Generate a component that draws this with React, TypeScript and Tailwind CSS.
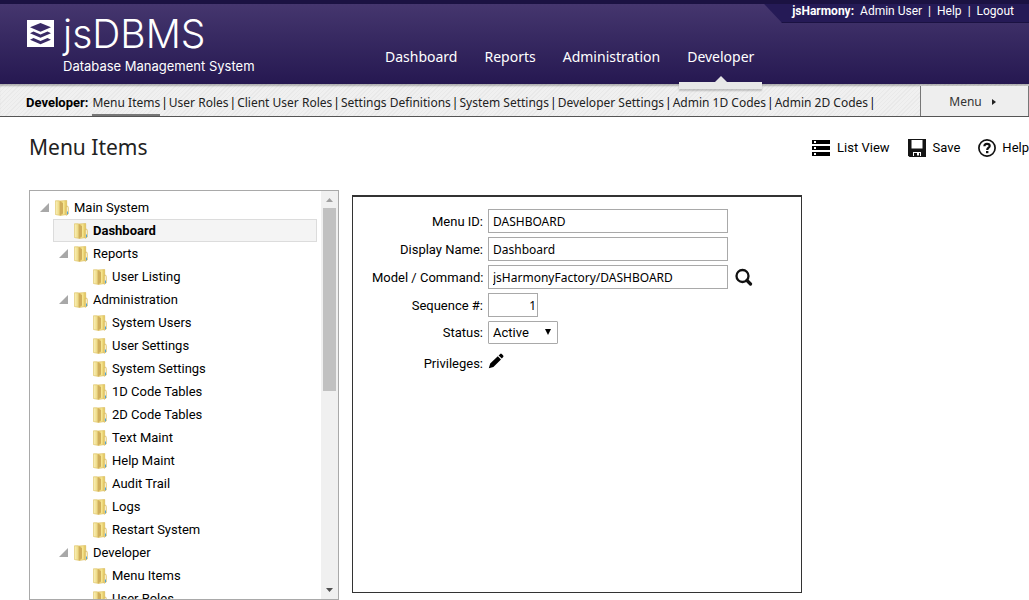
import { useState } from "react";

const sans = "font-['Noto_Sans',sans-serif]";

const mainTabs = ["Dashboard", "Reports", "Administration", "Developer"];

const subLinks = [
  "Menu Items",
  "User Roles",
  "Client User Roles",
  "Settings Definitions",
  "System Settings",
  "Developer Settings",
  "Admin 1D Codes",
  "Admin 2D Codes",
];

type TreeNode = { label: string; depth: number; open?: boolean };

const tree: TreeNode[] = [
  { label: "Main System", depth: 0, open: true },
  { label: "Dashboard", depth: 1 },
  { label: "Reports", depth: 1, open: true },
  { label: "User Listing", depth: 2 },
  { label: "Administration", depth: 1, open: true },
  { label: "System Users", depth: 2 },
  { label: "User Settings", depth: 2 },
  { label: "System Settings", depth: 2 },
  { label: "1D Code Tables", depth: 2 },
  { label: "2D Code Tables", depth: 2 },
  { label: "Text Maint", depth: 2 },
  { label: "Help Maint", depth: 2 },
  { label: "Audit Trail", depth: 2 },
  { label: "Logs", depth: 2 },
  { label: "Restart System", depth: 2 },
  { label: "Developer", depth: 1, open: true },
  { label: "Menu Items", depth: 2 },
  { label: "User Roles", depth: 2 },
];

const indents = ["pl-0", "pl-[19px]", "pl-[38px]"];

function Logo() {
  return (
    <svg viewBox="0 0 27 27" className="size-[27px] shrink-0" aria-hidden="true">
      <rect width="27" height="27" fill="#fff" />
      <g fill="#3a2b66">
        <path d="M13.5 3 24 7.3 13.5 11.800 3 7.300Z" />
        <path d="M3 13.200 6.500 11.600 13.500 14.400 20.500 11.600 24 13.200 13.500 17.800Z" />
        <path d="M3 19.700 6.500 18.100 13.500 20.900 20.500 18.100 24 19.700 13.500 24.300Z" />
      </g>
    </svg>
  );
}

function Folder() {
  return (
    <svg viewBox="0 0 14 16" className="h-4 w-[14px] shrink-0" aria-hidden="true">
      <defs>
        <linearGradient id="front" x1="0" x2="1">
          <stop offset="0" stopColor="#faf2bd" />
          <stop offset="1" stopColor="#ecd67c" />
        </linearGradient>
        <linearGradient id="back" x1="0" x2="1">
          <stop offset="0" stopColor="#e3c765" />
          <stop offset=".5" stopColor="#f6e794" />
          <stop offset="1" stopColor="#dfbf55" />
        </linearGradient>
      </defs>
      <path d="M5 1 11.700 .5V14.500L5 15.500Z" fill="url(#back)" stroke="#d9b952" strokeWidth=".6" />
      <path d="M11.300 6.500Q13.300 5 13.300 8V14L11.300 15.300Z" fill="#fdf8dc" stroke="#d6b24c" strokeWidth=".7" />
      <path d="M12 11.500H13V14.200H12Z" fill="#4fa3d8" />
      <path d="M.4.800H4.600V15.300L.4 14.500Z" fill="url(#front)" stroke="#e0c467" strokeWidth=".7" />
      <path d="M4.800 1.200 8 3V13.500L4.800 15.500Z" fill="#d0ae5c" />
    </svg>
  );
}

function ListIcon() {
  return (
    <svg viewBox="0 0 18 16" className="h-4 w-[18px]" aria-hidden="true">
      <path d="M0 0H18V4H0ZM0 6H18V10H0ZM0 12H18V16H0Z" />
      <path d="M2 1H4V3H2ZM2 7H4V9H2ZM2 13H4V15H2Z" fill="#fff" />
    </svg>
  );
}

function SaveIcon() {
  return (
    <svg viewBox="0 0 18 18" className="size-[18px]" aria-hidden="true">
      <path d="M0 0H18V18H1.500L0 16.500Z" fill="#151515" />
      <path d="M3.500 1H14.500V9.500H3.500Z" fill="#fff" />
      <path d="M5 13H13V17H5Z" fill="#fff" />
      <path d="M6 14H12V17H6Z" fill="#151515" />
      <path d="M9 14H11V16.500H9Z" fill="#fff" />
    </svg>
  );
}

function HelpIcon() {
  return (
    <svg viewBox="0 0 18 18" className="size-[18px]" fill="none" stroke="#111" aria-hidden="true">
      <circle cx="9" cy="9" r="8.100" strokeWidth="1.700" />
      <path d="M6.400 7.200C6.400 5.500 7.500 4.800 9 4.800S11.700 5.600 11.700 6.900C11.700 8.700 9.200 8.700 9.200 10.900" strokeWidth="2.200" />
      <path d="M8 12H10.400V14.200H8Z" fill="#111" stroke="none" />
    </svg>
  );
}

const inputClass =
  "h-6 border border-[#a9a9a9] bg-white px-1 font-['Noto_Sans',sans-serif] text-[12px] text-black outline-none";

const labelClass = "pt-[2px] text-right whitespace-nowrap";

export default function App() {
  const [selected, setSelected] = useState(1);
  const [status, setStatus] = useState("Active");

  return (
    <div className="flex min-h-screen flex-col overflow-x-hidden bg-white font-[Roboto,sans-serif] text-[13px] text-black">
      <header className="relative flex h-[84px] border-t-4 border-[#1b1242] bg-linear-to-b from-[#45366e] to-[#261851] text-white">
        <div className="flex w-[385px] shrink-0 gap-[9px] pt-4 pl-[27px]">
          <Logo />
          <div className="font-[Inter,sans-serif]">
            <div className="-mt-2 text-[39px] leading-[44px] font-light">jsDBMS</div>
            <div className="text-[13px] leading-5">Database Management System</div>
          </div>
        </div>
        <nav className={`flex items-start gap-[27px] pt-[42px] text-[14px] leading-[22px] ${sans}`}>
          {mainTabs.map((tab) => (
            <a key={tab} href="#" className="relative whitespace-nowrap">
              {tab}
              {tab === "Developer" && (
                <span className="absolute -inset-x-2 top-[30px] z-10 flex flex-col items-center">
                  <svg viewBox="0 0 12 6" className="h-[6px] w-3" aria-hidden="true">
                    <path d="M0 6 6 0 12 6Z" fill="#e6e6e6" />
                  </svg>
                  <span className="h-[7px] w-full bg-[#e8e8e8] shadow-[0_2px_2px_#0003]" />
                </span>
              )}
            </a>
          ))}
        </nav>
        <div className="absolute top-0 right-0 flex h-[19px] items-start gap-[6px] border-b border-[#1b1242] bg-[#251a56] pr-[15px] pl-7 text-[12px] leading-[15px] [clip-path:polygon(0_0,100%_0,100%_100%,18px_100%)]">
          <span className="font-bold">jsHarmony:</span>
          <a href="#">Admin User</a>
          <span>|</span>
          <a href="#">Help</a>
          <span>|</span>
          <a href="#">Logout</a>
        </div>
      </header>

      <div className="flex h-[33px] border-b border-[#555] bg-[repeating-linear-gradient(135deg,#f0f0f0_0px,#f0f0f0_2px,#e9e9e9_2px,#e9e9e9_3px)] shadow-[inset_0_3px_2px_-1px_#0004]">
        <nav className={`flex grow items-stretch pl-[26px] text-[12px] whitespace-nowrap text-[#222] ${sans}`}>
          <span className="mr-1 flex items-center pt-[5px] font-[Roboto,sans-serif] text-[13px] font-bold text-black">
            Developer:
          </span>
          {subLinks.map((link, i) => (
            <span key={link} className="flex">
              <a
                href="#"
                className={
                  i === 0
                    ? "flex items-center border-b-2 border-[#777] pt-[7px]"
                    : "flex items-center pt-[5px]"
                }
              >
                {link}
              </a>
              <span className="flex items-center px-px pt-[5px] text-black">|</span>
            </span>
          ))}
        </nav>
        <button
          type="button"
          className={`mt-[2px] flex w-[109px] shrink-0 items-center justify-center gap-[10px] border-x border-[#777] bg-[#eee] pt-[2px] pr-1 text-[12px] text-[#333] ${sans}`}
        >
          Menu
          <svg viewBox="0 0 4 6" className="h-[6px] w-1" aria-hidden="true">
            <path d="M0 0 4 3 0 6Z" fill="#222" />
          </svg>
        </button>
      </div>

      <div className="flex items-center justify-between pt-4 pl-[29px]">
        <h1 className={`text-[21px] leading-7 text-[#222] ${sans}`}>Menu Items</h1>
        <div className="flex items-center gap-[18px] pt-[2px]">
          <button type="button" className="flex items-center gap-[7px]">
            <ListIcon />
            List View
          </button>
          <button type="button" className="flex items-center gap-[7px]">
            <SaveIcon />
            Save
          </button>
          <button type="button" className="flex items-center gap-[6px]">
            <HelpIcon />
            Help
          </button>
        </div>
      </div>

      <main className="flex items-start gap-[13px] pt-[29px] pl-[29px]">
        <div className="flex h-[410px] w-[310px] shrink-0 border border-[#a9a9a9]">
          <ul className="grow overflow-hidden pt-[5px] pr-1 pl-[4px]">
            {tree.map((node, i) => (
              <li key={i} className={indents[node.depth]}>
                <button
                  type="button"
                  onClick={() => setSelected(i)}
                  className={
                    selected === i
                      ? "flex h-[23px] w-full items-center gap-[5px] border border-[#dcdcdc] bg-[#f4f4f4] pl-[20px] text-left font-bold"
                      : "flex h-[23px] w-full items-center gap-[5px] pl-[6px] text-left"
                  }
                >
                  {selected !== i && (
                    <svg viewBox="0 0 10 9" className="h-[9px] w-[10px] shrink-0" aria-hidden="true">
                      {node.open && <path d="M0 9 9 0V9Z" fill="#a8a8a8" />}
                    </svg>
                  )}
                  <Folder />
                  {node.label}
                </button>
              </li>
            ))}
          </ul>
          <div className="flex w-[17px] shrink-0 flex-col items-center bg-[#f0f0f0] py-[7px]" aria-hidden="true">
            <svg viewBox="0 0 7 4" className="h-1 w-[7px] shrink-0">
              <path d="M0 4 3.500 0 7 4Z" fill="#a0a0a0" />
            </svg>
            <div className="mt-[6px] h-[183px] w-[13px] bg-[#c1c1c1]" />
            <svg viewBox="0 0 7 4" className="mt-auto h-1 w-[7px] shrink-0">
              <path d="M0 0H7L3.500 4Z" fill="#505050" />
            </svg>
          </div>
        </div>

        <form
          className="mt-[5px] min-h-[398px] w-[450px] border border-t-2 border-[#333] pt-3 pl-[19px]"
          onSubmit={(e) => e.preventDefault()}
        >
          <div className="grid grid-cols-[111px_1fr] items-center gap-x-[5px] gap-y-1">
            <label htmlFor="menu-id" className={labelClass}>Menu ID:</label>
            <input id="menu-id" defaultValue="DASHBOARD" className={`${inputClass} w-[240px]`} />
            <label htmlFor="display" className={labelClass}>Display Name:</label>
            <input id="display" defaultValue="Dashboard" className={`${inputClass} w-[240px]`} />
            <label htmlFor="command" className={labelClass}>Model / Command:</label>
            <div className="flex items-center gap-[7px]">
              <input id="command" defaultValue="jsHarmonyFactory/DASHBOARD" className={`${inputClass} w-[240px]`} />
              <button type="button" aria-label="Search">
                <svg viewBox="0 0 18 18" className="size-[18px]" fill="none" stroke="#111" aria-hidden="true">
                  <circle cx="7.500" cy="8" r="6" strokeWidth="2.300" />
                  <path d="M12 12.500 15.500 16" strokeWidth="3.200" strokeLinecap="round" />
                </svg>
              </button>
            </div>
            <label htmlFor="sequence" className={labelClass}>Sequence #:</label>
            <input id="sequence" defaultValue="1" className="h-6 w-[50px] border border-[#a9a9a9] bg-white pr-px font-['Noto_Sans',sans-serif] text-right text-[12px] text-black outline-none" />
            <label htmlFor="status" className="text-right">Status:</label>
            <div className="relative w-[70px]">
              <select
                id="status"
                value={status}
                onChange={(e) => setStatus(e.target.value)}
                className="block h-[23px] w-full appearance-none rounded-[1px] border border-[#a9a9a9] bg-white pl-1 text-[13px]"
              >
                <option>Active</option>
                <option>Inactive</option>
              </select>
              <svg viewBox="0 0 6 6" className="pointer-events-none absolute top-2 right-[7px] size-[6px]" aria-hidden="true">
                <path d="M0 0H6L3 6Z" />
              </svg>
            </div>
            <span className="pt-[6px] text-right">Privileges:</span>
            <button type="button" aria-label="Edit privileges" className="justify-self-start">
              <svg viewBox="0 0 16 16" className="size-4" aria-hidden="true">
                <path d="M.8 15.200 2.200 10.600 9.800 3.200 13 6.400 5.400 13.900ZM10.600 2.400 12.200.9Q13 .3 13.800 1L15.200 2.400Q15.800 3.200 15.200 4L13.800 5.500Z" />
              </svg>
            </button>
          </div>
        </form>
      </main>
    </div>
  );
}
